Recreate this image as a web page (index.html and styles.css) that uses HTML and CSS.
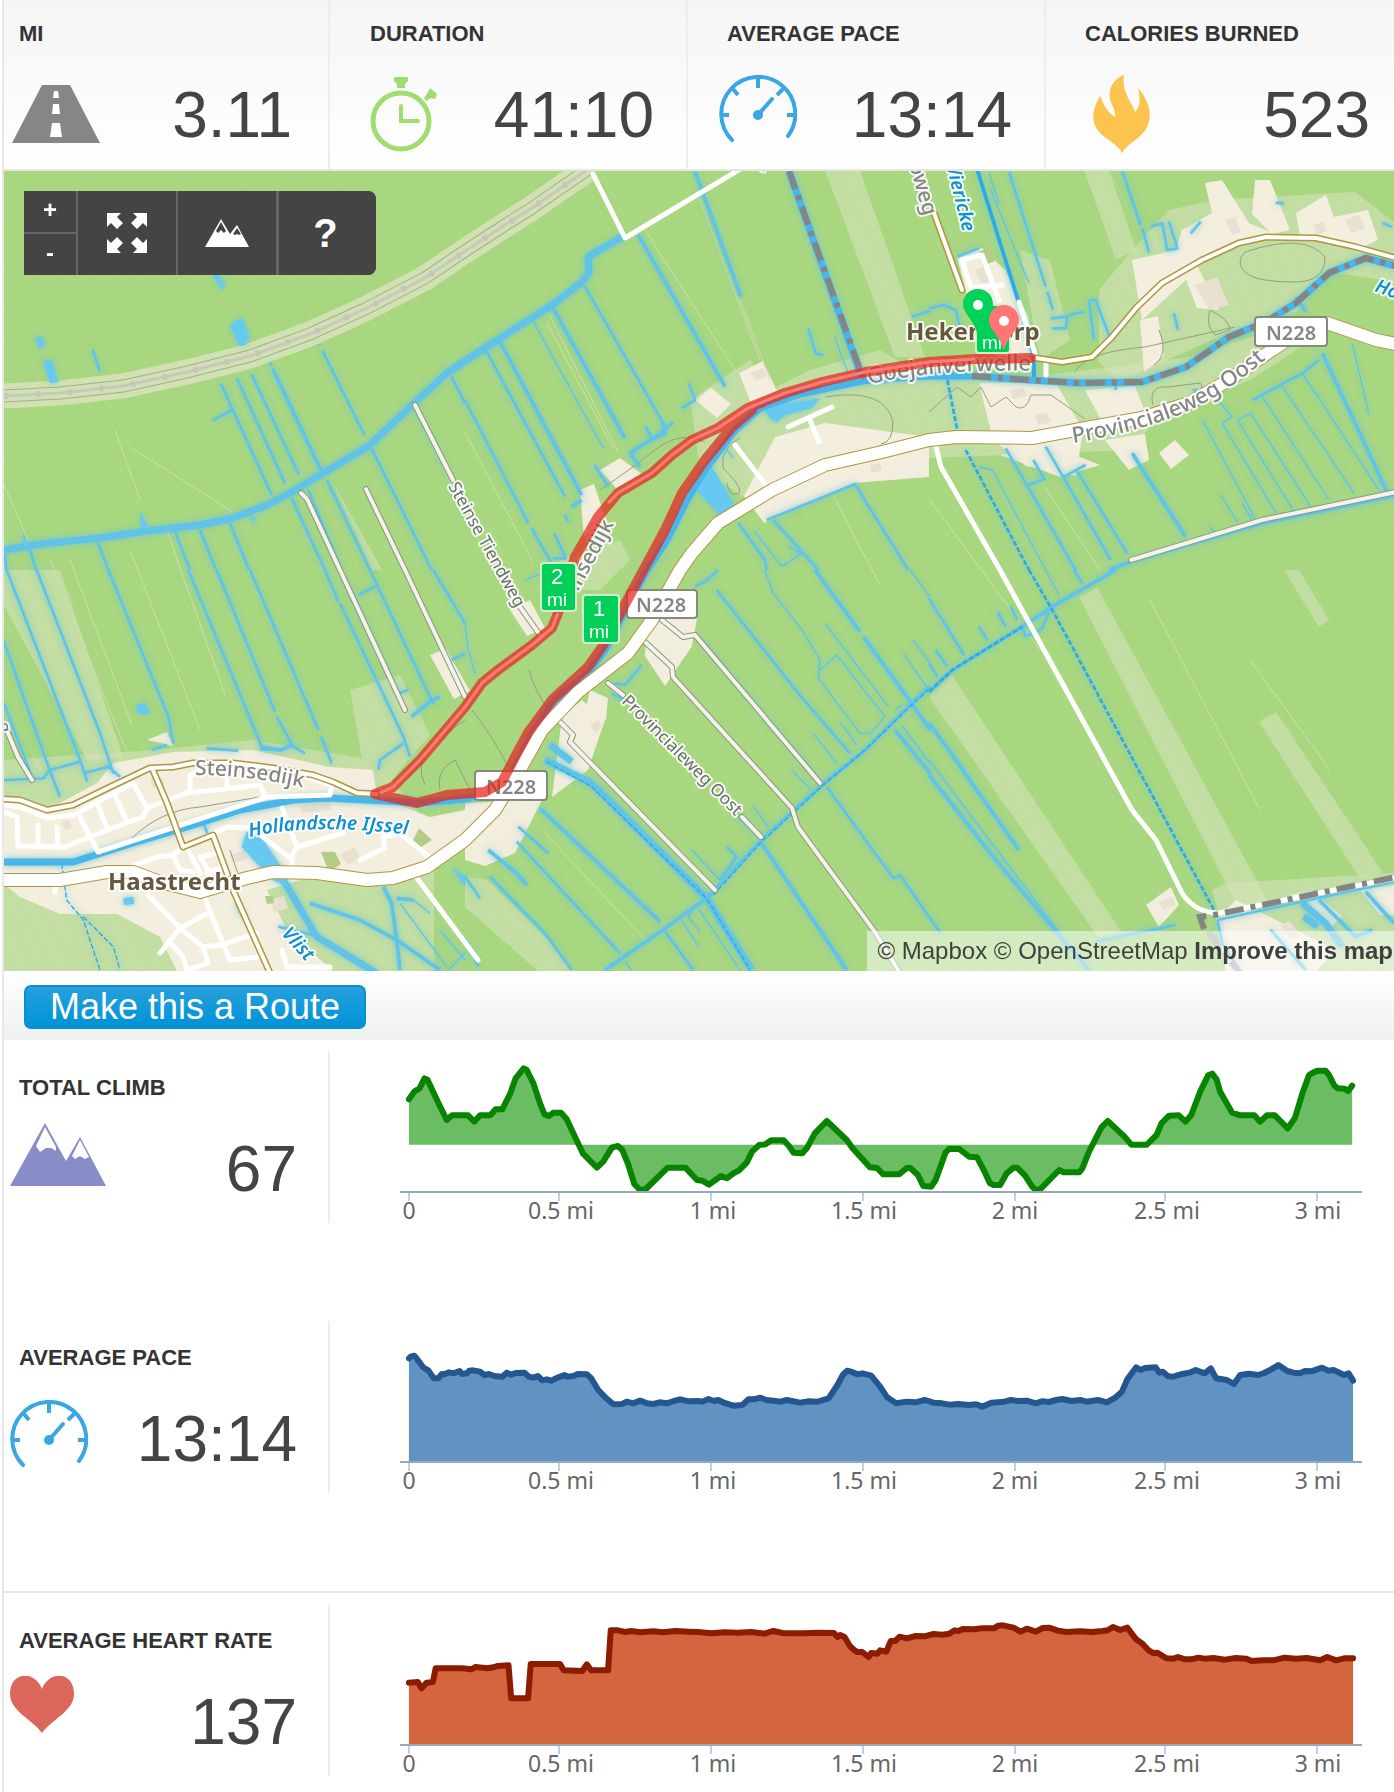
FILE: index.html
```html
<!DOCTYPE html>
<html lang="en">
<head>
<meta charset="utf-8">
<title>Workout</title>
<meta name="viewport" content="width=device-width, initial-scale=1">
<link rel="stylesheet" href="styles.css">
</head>
<body>
<main class="workout">
  <svg class="defs" width="0" height="0" aria-hidden="true">
    <symbol id="gauge" viewBox="0 0 78 68">
      <g fill="none" stroke="#39a7e3" stroke-width="4" stroke-linecap="round">
        <path d="M13 65A37 37 0 1 1 69 61"/>
        <path d="M39 3v10M14 14l5 6M64 14l-6 6M3 40h7M75 40h-7" stroke-linecap="butt"/>
        <path d="M39 40l14-16"/>
      </g>
      <circle cx="39" cy="40" r="5" fill="#39a7e3"/>
    </symbol>
  </svg>

  <section class="stats">
    <div class="stat stat-distance">
      <h2 class="label">MI</h2>
      <div class="reading">
        <svg width="88" height="78" viewBox="0 0 88 78" aria-hidden="true"><path fill="#868686" d="M30 10h28l30 58H0z"/><path fill="#fff" d="M42 16h4l1 7h-6zM41 29h6l1 10h-8zM40 48h8l2 14H38z"/></svg>
        <span class="value">3.11</span>
      </div>
    </div>
    <div class="stat stat-duration">
      <h2 class="label">DURATION</h2>
      <div class="reading">
        <svg width="68" height="78" viewBox="0 0 68 78" aria-hidden="true"><g fill="none" stroke="#a0dd70" stroke-width="5"><circle cx="31" cy="46" r="28"/><path stroke-width="4" stroke-linecap="round" d="M31 31v15h17"/></g><path fill="#a0dd70" d="M26 2h10q3 0 2 4l-3 3v4h-8V9l-3-3q-1-4 2-4zM60 13l7 6-2 5-4-1-5 3-2-3 3-4z"/></svg>
        <span class="value">41:10</span>
      </div>
    </div>
    <div class="stat stat-pace">
      <h2 class="label">AVERAGE PACE</h2>
      <div class="reading">
        <svg width="78" height="78" viewBox="0 0 78 78" aria-hidden="true"><use href="#gauge" width="78" height="68"/></svg>
        <span class="value">13:14</span>
      </div>
    </div>
    <div class="stat stat-calories">
      <h2 class="label">CALORIES BURNED</h2>
      <div class="reading">
        <svg width="58" height="78" viewBox="0 0 58 78" aria-hidden="true"><path fill="#fcc44f" d="M31 0C20 4 15 14 17 24c1 6 6 10 5 18-5-3-10-8-15-21C-3 38-1 50 8 59c8 7 17 11 21 19 4-8 14-12 21-20 11-12 8-31-5-45 2 9 3 18-3 24-3-10-14-20-11-37z"/></svg>
        <span class="value">523</span>
      </div>
    </div>
  </section>

  <section class="map">
    <svg class="map-canvas" viewBox="4 171 1390 800" preserveAspectRatio="xMidYMid slice" role="img" aria-label="Route map">
      <defs>
        <pattern id="plots" width="34" height="180" patternUnits="userSpaceOnUse" patternTransform="rotate(-26)"><path d="M5 0v180M23 30v130" stroke="#aeda8a" fill="none"/></pattern>
        <path id="tSteinsedijk" d="M195 775Q250 775 310 789"/>
        <path id="tIJssel" d="M250 837Q315 822 420 836"/>
        <path id="tGoejan" d="M869 384Q940 368 1044 371"/>
        <path id="tProv" d="M1073 443Q1140 432 1188 411T1300 328"/>
        <path id="rail" d="M4 396L60 393L123 386L187 372L250 356L310 334L367 308L425 278L465 251L505 225L532 208L565 185L590 168"/>
        <path id="n228" d="M0 880L60 880L107 872L133 872L160 882L200 892L247 878L273 872L317 873L367 880L393 878L427 867L465 840L495 810L518 773L542 730L578 692L628 653L652 620L680 570L692 553L718 523L772 490L825 465L882 452L929 440L956 437L1032 438L1086 428L1142 418L1189 403L1229 380L1269 352L1310 325L1327 323L1376 340L1396 344"/>
        <path id="lanes" d="M415 405L453 480M301 493L307 499L340 570L405 710M366 489L405 570L465 697M8 733L18 757L32 780M520 607L540 635M662 620L683 637L695 635L820 783M645 642L672 667L673 677L792 808L798 827L875 932L898 970M608 683L623 695M742 817L761 837M560 722L573 735L570 742L715 890M1131 560L1262 520L1396 492"/>
        <path id="dikes" d="M4 799L20 800L47 810L73 805L110 787L150 768L173 767L193 763L233 763L273 768L313 775L333 782L357 793L377 794M934 213L962 290M1036 358L1062 362L1092 357L1112 337L1136 308L1162 283L1202 260L1239 243L1266 237L1316 238L1356 247L1396 258M152 768L167 803L183 847L213 835L233 890L270 973"/>
      </defs>
      <rect x="4" y="171" width="1390" height="800" fill="#a8d780"/>
      <rect x="4" y="171" width="1390" height="800" fill="url(#plots)"/>

      <!-- pale meadows -->
      <g class="meadow">
        <path d="M4 570h56l63 187-36 3L4 605zM825 170h35l65 187h-30zM1084 170h25l27 80-20 10zM1079 597l18-10 172 316-27 12zM929 697l23-22 170 258-24 4zM1259 722l17-10 107 161-24 4zM1284 570h15l30 50-10 7zM330 477l52 93h-10zM465 876l23 4 57 57 27 34h-34l-73-64z"/>
        <path d="M690 400l60-40 20 30 40-20 70-20 50 30 100-3 160-20 60-20 70-20-3 20-67 43-94 40-26 30-200 8-60 20-110 30-60-40z"/>
        <path d="M1099 290l33-40 37-40 46-10 140-8 39 30v60l-65-10-33 40-67 20-110 50-20-20zM350 690l50-15 30 60-60 70zM560 560l60-20 10 20-30 30-40 0zM4 760l150-10 100-10 120 20 60 70v141H4z"/>
        <path d="M1212 890l14-7 168-10v98h-160zM1020 250l30 10 20 80-30 20z"/>
      </g>
      <!-- built-up land -->
      <g class="town">
        <path d="M4 800l43 10 50-27 16-20 60-11 80-2 77 17 43 3 4 27 53 20 35-7v27l-48 40-117 3-33 10 20 40 46 41H177l-17-34-43-23H60l-40-17-16-13z"/>
        <path d="M465 803l77-3-27 53-30 13-20-6zM562 717l20-17 23 20-17 50-36 27zM648 603l50 10-6 33-27 40-20-30zM590 690l18 8-2 22-20-12zM510 610l20-10 15 28-18 8z"/>
        <path d="M775 437l50-14 104 14v40l-75 6-90 40-20-27zM739 373l24-12 14 30-26 12zM600 470l20-12 22 16-26 14zM580 490l14-6 10 30-20 24zM695 400l16-12 20 16-14 14z"/>
        <path d="M979 383h77l27 47-7 46-50-10-33-26zM1000 455l50-10 50 20-40 12zM1085 390l50-4 10 26-44 8zM1105 440l40-6 4 26-20 10zM1159 453l16-13 14 15-18 14z"/>
        <path d="M1132 260l44-10 6-20 30-17-7-30 17-3 27 43 33 14-33 6-53 20 23 47-22-2-11-28-44 40zM1296 213l30-18 8 22 34-7 10 30-15 7-47-10h-16zM1255 180l15 0 20 50-18 4-20-20z"/>
        <path d="M957 257l25-9 23 22 23 46 8 40h-40l-27-53zM1216 920l20-20 100 50-20 21h-90zM1290 895l22-4 30 25-10 10zM1360 890l34-5v30l-14 0zM1146 905l25-18 8 18-20 22zM430 655l16-6 24 42-16 8zM147 740l20-8 6 14zM1140 320l18-4 6 40-20 16z"/>
      </g>
      <g class="building">
        <path d="M751 373l12-5 4 8-11 5zM1195 285l22-8 12 28-20 5zM1225 220l10-3 6 15-9 3zM1313 225l10-3 4 9-10 4zM1345 220l14-5 6 14-14 4zM975 270l9-3 7 14-9 3zM1159 902l14-5 2 8-12 5zM62 822l6-2 4 8-7 2zM150 780l12-2 3 7-12 3zM230 855l14-4 3 8-14 4zM300 805l30-4 1 9-30 3zM340 855l14-8 6 10-12 8zM270 900l14-4 4 12-14 4zM1280 925l10-4 10 15-9 4zM1010 390l14-2 3 8-14 3zM1035 415l12-3 4 10-13 3zM870 465l10-2 2 7-10 3zM590 725l8-5 5 7-8 6z"/>
      </g>
      <path class="park" d="M321 852l14 0 6 12-12 8zM413 840l6-12 13 12-11 7zM265 896l8 0 1 7-7 1zM979 252l11-5 5 14-12 5zM690 690l10 4-4 14-10-6z"/>

      <!-- railway -->
      <use href="#rail" class="rail-bed"/><use href="#rail" class="rail-edge"/><use href="#rail" class="rail-gap"/><use href="#rail" class="rail-line"/>
      <use href="#rail" class="rail-ties"/>

      <!-- field paths and contour lines -->
      <path class="track" d="M130 447l103 65M115 430l25 70M4 485l25 57M50 560l80 200M70 560l62 165M130 550l70 180M165 525l60 170M548 312l70 140M547 323l66 125M645 230l90 140M700 200l60 160M740 300l30 80M465 432l68 130M545 833l100 107M830 490l50 95M930 500l110 150M1040 480l60 90M1150 600l110 210M1250 660l80 110"/>
      <path class="contour" d="M1245 252q60-20 80 5 0 25-30 25-40 0-50-10-10-10 0-20zM825 397q60-10 68 25 0 20-12 22M740 438q-20 10-17 30 20 20 16 25-10 5-12-10M600 490q30-20 55-40t50-8M929 412l28-25 14 10 10-10 10 20 15-10 10 10q10 5 15-12l20 0 34 24M1075 372q10-20 70-25l90-20M1210 310q20 10 20 20l-15 5q-10-10-5-25zM1153 405q-5-20 15-18l32-4q10 10-30 22M425 785q-10-20 5-40l35-25M440 790q-5-20 15-30l15 30M529 670q5 20 20 40M472 710q20 25 38 60M1159 330q10 25-5 35M130 840q30-30 70-33l60-10M240 880l-10-30"/>

      <!-- waterways -->
      <g class="water">
        <path class="w8" d="M4 550L40 544L100 538L147 531L200 525L233 518L267 505L290 493L320 475L347 459L370 445L410 407L447 373L465 361L502 337L552 305L582 282L589 273L588 257L625 235"/>
        <g transform="translate(0 170) scale(.333333)">
          <path class="t9" d="M662 640L815 975M697 720L637 752M711 625L855 940M755 613L897 915M810 578l4 10M957 523l2 4M967 542L1093 795M1112 830L1295 1200M1355 620L1395 700M980 930L1110 1200M925 960L1025 1200M875 985L975 1200M690 1060L747 1200M600 1080L648 1200M525 1085L570 1200M295 1120L325 1200M90 1140L108 1200M12 1140L20 1200M278 540L300 605M1245 715L1355 930"/>
          <path class="t12" d="M818 596L962 900"/>
          <path class="fill" d="M690 465L725 443L748 500L735 525L718 527ZM638 315l28 45 10-10-18-35zM105 503l22-3 8 28-15 8zM130 570l25 3 20 63-25 3zM420 1020l25 55h-20zM750 1045l15-5-3 22zM65 1080l20 45h-12z"/>
        </g>
        <g transform="translate(465 170) scale(.333333)">
          <path class="t12" d="M690 5L828 380M520 195L780 650M265 415L480 805M105 515L350 975M592 755L600 790L555 810L495 850L525 890M320 1010L350 990"/>
          <path class="t9" d="M360 350L592 755M65 545L300 980M0 690L190 1060M200 1075L260 1180M540 768l20 35M1030 475L1052 550L1075 555M672 640L690 690L650 715M388 885L430 950M300 1035l10 20M268 1090l32 70M1340 440l55-18M905 1050L1170 942L1205 1000L1330 1200M925 1050L1060 1200M820 1060L900 1170L905 1200M560 808L625 757M265 1165h40"/>
          <path class="t5" d="M205 455L415 835M1108 500L1150 610M870 1085L950 1190L1010 1150L970 1130M770 820l35 45"/>
          <path class="fill" d="M695 960L740 890L820 1025L770 1040ZM895 715L1065 685L1040 715L960 735L935 757L915 745z"/>
        </g>
        <g transform="translate(929 170) scale(.333333)">
          <path class="t12 deep" d="M145 0L270 400L315 560V630"/>
          <path class="t5" d="M180 10L210 100M185 60L300 340M150 890L190 900L350 1200M820 750L980 1050M880 760L1045 1035M925 750L1095 1025M965 730L1145 1010M1000 680L1200 990M1060 650L1275 970M1120 610L1350 960M1270 520L1320 735M875 975l50 80M940 1000l35 60M840 1070l20 20M925 750l40-20M880 760l30-20-70-80M1150 660l20 20"/>
          <path class="t9" d="M85 260L150 235M240 5L350 350M355 365L372 420M580 5L635 165M640 175L660 248M665 170L700 160L715 240L745 235L720 155M815 155L785 190M365 445L415 440L410 475L370 475M480 390L500 390L545 510M480 390L495 510M420 435L465 425M0 415L45 405L80 420L95 480M735 430l12 50M230 835L440 1200M313 870L345 925M350 830L405 925L545 1170M405 920L470 885M445 905L595 1150M970 690L1120 610L1170 570M1040 98l25 3M1360 160l30 10M790 660h15M560 640v20M300 945l50-20"/>
          <path class="t12" d="M610 850L635 890L770 1100M1180 550L1330 870L1375 970M540 1200L605 1175L1000 1060L1395 978M1100 380l30 45"/>
          <path class="t9 deep dash" d="M55 630L85 780M110 840L300 1200"/>
        </g>
        <g transform="translate(0 570) scale(.333333)">
          <path class="t9" d="M20 0L240 570L262 635M110 0L300 490L340 610M10 210L145 590L180 680M12 400L95 620M325 0L505 440L520 520M565 0L785 530L850 540M650 0L825 425M830 440L880 530L915 550M750 0L955 480M963 500L995 580M975 0L1015 95M1020 100L1210 500L1230 560M1030 20L1195 370L1225 360M1110 0L1280 360L1300 400M1075 75L1125 50M1300 0L1395 160M12 630L130 625L150 600L240 575M250 610L325 590L360 620M455 540L500 525M620 535L715 542M1135 600L1140 570L1210 520M1355 270L1395 250M610 755L625 800M835 1070L940 1095"/>
          <path class="t12" d="M1235 440L1290 395L1320 380M930 1000L1080 1050L1190 1110L1320 1200M1150 950L1175 1000L1190 1110L1200 1200M1190 985L1240 990M710 1000l25 45M780 535l60 5 40-15"/>
          <path class="t5" d="M1200 1000L1340 1190M1240 990l50 40M1320 1080l75 90M1395 1150l-50 50"/>
          <path class="river" d="M850 930L950 1100L1130 1210"/>
          <path class="fill" d="M725 830L740 785L790 810L850 900L860 950L820 930L770 880zM410 405l25-5 15 30-35 3zM370 985l30-5 2 22-30 3zM1355 890l40 30v30z"/>
          <path class="t5 deep dash" d="M185 880L200 990L250 1050L300 1200M250 1040L340 1130L360 1200"/>
        </g>
        <g transform="translate(465 570) scale(.333333)">
          <path class="t5" d="M900 0L925 70L1015 185L1065 270L1060 325L1185 490L1215 490L1260 440L1115 255L1065 300M1080 160L1270 410M1315 250L1385 350M1335 0L1395 80M1310 465L1395 580M700 1015L825 1200M680 840L765 930M865 710L910 770M1125 455l50 70M1045 490l70 90M1290 420l20-15M680 1020l-10 20 35 45M650 1050l50 80M980 600l60 60M1345 210l50 70M480 1175l20 25M0 160l10 80 20 70M180 30l50-20"/>
          <path class="t9" d="M755 60L1000 370L1155 550M1085 650L1285 925L1305 915L1395 1045M160 770L250 850M155 815L465 1150M75 920L240 1090L320 1200M0 920L45 985M600 1085L685 1200M785 830L815 860L765 930M450 340L480 345L530 285M820 740L885 805M725 30L760 0M690 50L730 30M700 200L1065 635M440 370L475 390M0 1110L40 1190"/>
          <path class="t12" d="M1050 0L1185 185M1195 200L1340 400L1395 480M890 820L1145 1200M225 715L585 1055M70 840L160 915L185 945M1290 480L1395 610M420 1200L600 1075L725 985L890 810L1070 645L1200 540L1340 400L1395 350"/>
          <path class="river" d="M240 570L380 640L600 860L725 985L860 1200M255 525L320 575"/>
          <path class="t5 deep dash" d="M245 575L380 650L600 865L725 985L855 1200M745 975L890 815L1070 650L1200 540L1340 405L1395 355"/>
        </g>
        <g transform="translate(929 570) scale(.333333)">
          <path class="t9" d="M0 85L105 255M20 240L55 290M150 170L175 210M205 125L230 170M245 110l20 40M435 0L460 40M280 170l10 30 50-25 20-50M0 280l25 40M865 1050L1395 935M865 1050L880 1120L930 1200M500 1115L740 1065M1025 1080L1130 1200M0 1040L35 1090"/>
          <path class="t12" d="M0 365L70 300L280 170L370 110L560 0M0 460L60 540L150 670L270 840M0 615L200 870L480 1200M1170 990L1280 1100L1330 1080M1310 965L1395 1060"/>
          <path class="t5" d="M350 0L390 75M0 570L400 1100"/>
          <path class="river" d="M1120 1000L1190 1060L1240 1130M1125 1040l40 30"/>
          <path class="t9 deep dash" d="M300 0L370 120L855 1020M0 365L70 300L280 170"/>
        </g>
        <path class="main-river" d="M4 862L73 862L133 843L187 827L240 810L293 800L327 798L367 800L420 803L465 799L485 794L512 773L532 733L555 700L588 673L605 650L622 617L647 570L667 540L687 500L705 470L735 430L760 408L800 394L862 381L895 378L929 376L972 376L1029 380L1079 383L1142 382L1186 367L1229 337L1266 322L1296 303L1329 273L1366 258L1396 266"/>
        <path class="main-river" d="M789 171L862 378"/>
      </g>

      <!-- lanes -->
      <use href="#lanes" class="lanes-case"/><use href="#lanes" class="lanes"/>
      <g class="streets">
        <path d="M4 805L20 807L47 818L73 815L133 783L147 808L143 817L107 830L65 847L18 846L17 817L4 812M80 817L98 852L267 797L330 795L332 785L307 777M147 808L187 793L260 785L265 797M97 803L108 830M115 795L127 822M38 825V845M57 827L58 845M190 792V775L200 772M227 787V778M135 865L157 857L173 855L183 847L227 827L250 828M173 855L180 870L193 872M282 808L297 847L290 858L263 837M297 847L343 833M292 865V858M360 860L385 848L383 837L400 833L430 858M148 895L180 928L160 953M170 942L183 957L187 970M180 928L210 912L205 898M210 912L230 960M180 928L203 947L222 945L257 933M203 947L208 963L187 970M230 960L257 957M282 950L287 967L330 967M200 857L210 873M217 853L200 857M207 872L222 868M188 850L200 873M55 885V892M417 878L478 960"/>
        <path d="M593 174L625 238L742 168M735 445L768 488M788 427L832 407M810 420L819 442M936 447L941 467L1000 570L1132 810L1156 840L1182 893Q1195 913 1219 913L1396 878M962 260L982 255L999 300M962 260L971 288L1002 285M1019 302L1036 357M1046 360V375"/>
      </g>
      <use href="#dikes" class="dike-case"/><use href="#dikes" class="dike"/>
      <use href="#n228" class="n228-case"/><use href="#n228" class="n228"/>

      <path class="border" d="M789 171L862 375L869 381M972 376L1029 380L1079 383L1142 382L1186 367L1229 337L1266 322L1296 303L1329 273L1366 258L1396 266M1204 929L1200 917L1219 914L1396 877"/>
      <path class="border faded" d="M1208 932L1240 973"/>

      <!-- place and street names -->
      <g class="names">
        <text class="place" x="108" y="890">Haastrecht</text>
        <text class="place" x="906" y="340">Hekendorp</text>
        <text class="road"><textPath href="#tSteinsedijk">Steinsedijk</textPath></text>
        <text class="road road-wide"><textPath href="#tGoejan">Goejanverwelle</textPath></text>
        <text class="road road-wide"><textPath href="#tProv">Provincialeweg Oost</textPath></text>
        <text class="stream"><textPath href="#tIJssel">Hollandsche IJssel</textPath></text>
        <text class="stream" transform="translate(281 934) rotate(48)">Vlist</text>
        <text class="stream" transform="translate(945 160) rotate(76)">Wiericke</text>
        <text class="stream" transform="translate(757 168) rotate(30)">e</text>
        <text class="stream" transform="translate(1374 291) rotate(20)">Ho</text>
        <text class="road" transform="translate(909 164) rotate(74)">oweg</text>
        <text class="road" transform="translate(578 592) rotate(-62)">insedijk</text>
        <text class="lane" transform="translate(448 486) rotate(61)">Steinse Tiendweg</text>
        <text class="lane" transform="translate(621 702) rotate(45)">Provincialeweg Oost</text>
        <text class="lane" transform="translate(-2 723) rotate(80)">g</text>
      </g>
      <g class="shields">
        <rect x="1255" y="317" width="72" height="29" rx="3"/><text x="1291" y="340">N228</text>
        <rect x="627" y="590" width="70" height="28" rx="3"/><text x="661" y="612">N228</text>
        <rect x="475" y="771" width="72" height="29" rx="3"/><text x="511" y="794">N228</text>
      </g>

      <!-- recorded run -->
      <path class="run" d="M1031 358L975 359L929 362L865 372L822 382L785 393L748 408L718 428L692 440L672 455L652 473L618 493L598 517L575 557L558 613L552 628L532 645L498 670L482 683L465 707L420 760L393 787L375 794L417 803L447 795L485 792L502 782L515 757L528 733L552 700L588 667L602 647L622 610L645 567L665 530L682 493L705 460L732 427L752 410"/>
      <path class="run-core" d="M975 359L929 362L865 372L822 382L785 393L748 408L718 428L692 440L672 455L652 473L618 493L608 503M558 613L552 628L532 645L498 670L482 683L465 707L420 760L393 787L380 793"/>

      <g class="mile">
        <rect x="976" y="305" width="34" height="48" rx="3"/><text class="unit" x="992" y="349">mi</text>
        <rect x="541" y="563" width="35" height="48" rx="3"/><text x="557" y="584">2</text><text class="unit" x="557" y="606">mi</text>
        <rect x="583" y="595" width="36" height="48" rx="3"/><text x="599" y="616">1</text><text class="unit" x="599" y="638">mi</text>
      </g>
      <path fill="#00d35a" d="M978 289c9 0 15 7 15 15 0 10-9 15-15 32-4-17-15-22-15-32 0-8 6-15 15-15z"/><circle cx="978" cy="305" r="5" fill="#fff"/>
      <path fill="#ff7672" d="M1004 305c9 0 15 7 15 15 0 10-10 14-15 30-5-16-15-20-15-30 0-8 6-15 15-15z"/><circle cx="1004" cy="321" r="5" fill="#fff"/>
    </svg>

    <div class="controls">
      <div class="zoom">
        <button type="button" aria-label="Zoom in">+</button>
        <button type="button" aria-label="Zoom out">-</button>
      </div>
      <button type="button" class="tool" aria-label="Full screen">
        <svg width="40" height="40" viewBox="0 0 40 40" aria-hidden="true"><path id="arrow" fill="#fff" d="M0 0h14l-4 4 6 6-6 6-6-6-4 4z"/><use href="#arrow" transform="matrix(-1 0 0 1 40 0)"/><use href="#arrow" transform="matrix(1 0 0 -1 0 40)"/><use href="#arrow" transform="matrix(-1 0 0 -1 40 40)"/></svg>
      </button>
      <button type="button" class="tool" aria-label="Terrain">
        <svg width="44" height="30" viewBox="0 0 44 30" aria-hidden="true"><path fill="#fff" d="M0 29L16 1l9 15 7-9 12 22z"/><path fill="#444" d="M16 4l5 9-2 2-3-3-3 3-2-2zM32 10l4 6-2 1-2-1-2 1-2-1z"/></svg>
      </button>
      <button type="button" class="tool help" aria-label="Help">?</button>
    </div>
    <p class="credit"><a href="#">© Mapbox</a> <a href="#">© OpenStreetMap</a> <a href="#" class="improve">Improve this map</a></p>
  </section>

  <div class="actions"><button type="button" class="make-route">Make this a Route</button></div>

  <section class="row">
    <div class="summary">
      <h2 class="label">TOTAL CLIMB</h2>
      <div class="reading">
        <svg width="96" height="78" viewBox="0 0 96 78" aria-hidden="true"><path fill="#898dc7" d="M0 63L35 0l21 38 14-24 26 49z"/><path fill="#fff" d="M35 4l11 20 0 4-5-3-5 0-6 4-4-6zM70 17l9 17-4 2-5-3-5 3-3-3z"/></svg>
        <span class="value">67</span>
      </div>
    </div>
    <div class="chart">
      <svg viewBox="400 11 962 172" role="img" aria-label="Elevation over distance">
        <g transform="scale(.4445 .3333)">
          <path fill="#6abd62" d="M920 314V178L932 155L944 145L955 115L962 120L985 185L1005 240L1017 226H1053L1067 245L1080 226H1103L1115 208H1130L1148 160L1160 115L1178 85L1185 90L1200 130L1215 190L1225 223L1235 228L1245 218H1262L1275 238L1295 295L1312 342L1343 383L1357 365L1377 322L1390 318L1400 330L1413 372L1427 432L1440 450L1453 447L1502 383H1542L1568 420L1580 422L1595 434L1622 408L1635 415L1650 400L1662 392L1680 368L1692 335L1708 315L1722 313L1735 301H1763L1775 318L1785 338L1805 340L1815 325L1833 280L1860 243L1905 300L1918 325L1957 382L1973 384L1987 403H2023L2040 384H2048L2065 405L2077 438L2095 440L2105 420L2127 338L2135 327H2158L2180 350L2198 352L2215 395L2227 430L2235 435H2250L2265 400L2280 383H2288L2305 405L2322 440L2330 450L2340 448L2383 390L2393 397H2428L2435 385L2450 335L2478 262L2492 243L2530 290L2545 314H2580L2602 285L2613 250L2630 227L2652 226L2667 245L2680 225L2700 155L2718 106L2727 101L2737 118L2745 155L2772 218L2790 226H2822L2835 245L2850 226H2868L2897 265L2913 235L2930 160L2945 105L2955 97L2965 92H2982L2990 105L3002 137L3010 145L3025 146L3033 153L3042 137V314Z"/>
          <path class="series climb" d="M920 178L932 155L944 145L955 115L962 120L985 185L1005 240L1017 226H1053L1067 245L1080 226H1103L1115 208H1130L1148 160L1160 115L1178 85L1185 90L1200 130L1215 190L1225 223L1235 228L1245 218H1262L1275 238L1295 295L1312 342L1343 383L1357 365L1377 322L1390 318L1400 330L1413 372L1427 432L1440 450L1453 447L1502 383H1542L1568 420L1580 422L1595 434L1622 408L1635 415L1650 400L1662 392L1680 368L1692 335L1708 315L1722 313L1735 301H1763L1775 318L1785 338L1805 340L1815 325L1833 280L1860 243L1905 300L1918 325L1957 382L1973 384L1987 403H2023L2040 384H2048L2065 405L2077 438L2095 440L2105 420L2127 338L2135 327H2158L2180 350L2198 352L2215 395L2227 430L2235 435H2250L2265 400L2280 383H2288L2305 405L2322 440L2330 450L2340 448L2383 390L2393 397H2428L2435 385L2450 335L2478 262L2492 243L2530 290L2545 314H2580L2602 285L2613 250L2630 227L2652 226L2667 245L2680 225L2700 155L2718 106L2727 101L2737 118L2745 155L2772 218L2790 226H2822L2835 245L2850 226H2868L2897 265L2913 235L2930 160L2945 105L2955 97L2965 92H2982L2990 105L3002 137L3010 145L3025 146L3033 153L3042 137"/>
        </g>
        <path class="ticks" d="M409 153v8M559 153v8M711 153v8M863 153v8M1015 153v8M1165 153v8M1317 153v8"/><path class="axis" d="M400 152h962"/>
        <g class="scale"><text x="409" y="179">0</text><text x="561" y="179">0.5 mi</text><text x="713" y="179">1 mi</text><text x="864" y="179">1.5 mi</text><text x="1015" y="179">2 mi</text><text x="1167" y="179">2.5 mi</text><text x="1318" y="179">3 mi</text></g>
      </svg>
    </div>
  </section>

  <section class="row">
    <div class="summary">
      <h2 class="label">AVERAGE PACE</h2>
      <div class="reading">
        <svg width="78" height="78" viewBox="0 0 78 78" aria-hidden="true"><use href="#gauge" y="7" width="78" height="68"/></svg>
        <span class="value">13:14</span>
      </div>
    </div>
    <div class="chart">
      <svg viewBox="400 11 962 172" role="img" aria-label="Pace over distance">
        <g transform="scale(.889 .3333)">
          <path fill="#6093c2" d="M460 454V145L466 137L470 150L476 172L482 182L488 205L493 205L500 193L510 188L517 183L525 190L532 181L540 185L545 195L565 200L570 188L590 188L600 203L610 210L620 212L635 195L645 198L660 193L665 205L673 240L682 265L690 283L700 282L712 280L720 272L735 282L750 280L765 268L785 273L797 267L808 270L825 287L835 285L842 268L855 263L870 272L900 278L920 275L932 265L942 225L948 195L953 182L965 193L980 197L990 230L998 262L1008 280L1040 270L1060 280L1105 290L1115 278L1145 273L1165 280L1195 267L1235 270L1245 277L1255 262L1262 245L1268 208L1278 172L1300 172L1308 190L1320 200L1345 180L1355 190L1362 175L1368 205L1380 210L1388 222L1395 195L1415 195L1430 178L1438 165L1448 183L1462 190L1487 173L1500 180L1512 195L1522 212V454Z"/>
          <path class="series pace" d="M460 145L462 140L466 137L470 150L476 172L482 182L488 205L493 205L497 192L500 193L505 187L510 190L517 183L520 192L525 190L528 182L532 181L540 185L545 195L550 192L556 198L565 200L570 188L575 194L580 189L590 188L595 200L600 203L605 198L610 211L615 208L620 212L628 202L635 195L638 200L645 198L650 192L660 193L665 205L673 240L682 265L690 283L700 282L705 275L712 280L720 272L728 280L735 282L742 277L750 280L758 273L765 268L775 274L785 273L790 275L797 267L803 273L808 270L815 279L825 287L835 285L842 268L848 268L855 263L862 270L870 272L878 275L885 270L900 278L910 274L920 275L932 265L942 225L948 195L953 182L957 185L965 193L970 190L980 197L990 230L998 262L1008 280L1020 275L1030 277L1040 270L1050 278L1060 280L1068 284L1078 282L1090 285L1098 283L1105 290L1115 278L1130 275L1137 270L1145 273L1155 272L1165 280L1172 274L1180 276L1188 270L1195 267L1205 273L1215 270L1222 275L1235 270L1245 277L1255 262L1262 245L1268 208L1278 172L1283 180L1288 174L1300 172L1304 188L1308 185L1314 199L1320 200L1330 192L1338 188L1345 180L1355 190L1362 175L1368 205L1380 210L1388 222L1395 195L1405 191L1415 195L1422 189L1430 178L1438 165L1448 183L1455 188L1462 190L1468 183L1475 184L1487 173L1494 182L1500 180L1512 195L1517 190L1522 212"/>
        </g>
        <path class="ticks" d="M409 153v8M559 153v8M711 153v8M863 153v8M1015 153v8M1165 153v8M1317 153v8"/><path class="axis" d="M400 152h962"/>
        <g class="scale"><text x="409" y="179">0</text><text x="561" y="179">0.5 mi</text><text x="713" y="179">1 mi</text><text x="864" y="179">1.5 mi</text><text x="1015" y="179">2 mi</text><text x="1167" y="179">2.5 mi</text><text x="1318" y="179">3 mi</text></g>
      </svg>
    </div>
  </section>

  <section class="row row-heart">
    <div class="summary">
      <h2 class="label">AVERAGE HEART RATE</h2>
      <div class="reading">
        <svg width="64" height="78" viewBox="0 0 64 78" aria-hidden="true"><path fill="#dc665c" d="M32 57C22 43 0 35 0 18 0-5 25-6 32 13 39-6 64-5 64 18 64 35 42 43 32 57z"/></svg>
        <span class="value">137</span>
      </div>
    </div>
    <div class="chart">
      <svg viewBox="400 11 962 172" role="img" aria-label="Heart rate over distance">
        <g transform="translate(0 -12) scale(.889 .3333)">
          <path fill="#d4653f" d="M460 490V305L470 303L474 322L480 305L487 303L490 262L530 265L535 258L572 253L575 352H594L597 249H630L634 268L655 270L660 250L665 268H684L687 148L710 150L800 153L860 158L870 150L890 157L938 156L950 168L960 205L970 213L977 228L987 213L997 212L1002 180L1015 168L1068 158L1078 145L1118 142L1128 133L1140 140L1148 152L1155 143L1165 152L1180 140L1200 153L1240 150L1252 138L1268 140L1278 175L1292 208L1302 215L1312 232L1402 233L1408 240L1432 238L1445 230L1485 238L1493 228L1503 238L1522 232V490Z"/>
          <path class="series heart" d="M460 305L470 303L474 322L480 305L487 303L490 262H520L530 265L535 258L548 262L555 259L560 255L572 253L575 352H594L597 249H630L634 268L655 270L660 250L665 268H684L687 148L695 148L703 153L710 150L720 154L735 151L745 154L760 150L775 152L785 153L800 157L815 154L830 155L845 153L860 158L870 150L880 156L890 157L905 157L920 155L938 156L942 168L945 162L950 168L956 195L960 205L964 213L970 213L977 228L980 216L987 218L990 208L997 212L1002 180L1007 180L1012 167L1020 172L1030 165L1040 166L1050 159L1060 161L1068 158L1074 148L1078 150L1083 144L1095 145L1105 142L1118 142L1123 134L1128 133L1140 140L1148 152L1155 143L1165 152L1173 141L1180 140L1190 149L1200 153L1215 151L1228 153L1240 150L1246 148L1252 138L1260 147L1268 140L1278 175L1285 188L1292 208L1297 216L1302 215L1312 232L1320 233L1325 228L1333 235L1340 235L1348 230L1355 233L1365 231L1378 236L1390 231L1402 233L1408 240L1420 238L1432 238L1445 230L1458 233L1470 231L1485 238L1493 228L1503 238L1512 232L1522 232"/>
        </g>
        <path class="ticks" d="M409 153v8M559 153v8M711 153v8M863 153v8M1015 153v8M1165 153v8M1317 153v8"/><path class="axis" d="M400 152h962"/>
        <g class="scale"><text x="409" y="179">0</text><text x="561" y="179">0.5 mi</text><text x="713" y="179">1 mi</text><text x="864" y="179">1.5 mi</text><text x="1015" y="179">2 mi</text><text x="1167" y="179">2.5 mi</text><text x="1318" y="179">3 mi</text></g>
      </svg>
    </div>
  </section>
</main>
</body>
</html>
```
FILE: styles.css
```css
* { box-sizing: border-box; }
body {
  margin: 0;
  background: #fff;
  color: #444;
  font-family: "Liberation Sans", Arial, sans-serif;
}
h2, p { margin: 0; }
button { font-family: inherit; border: 0; padding: 0; margin: 0; cursor: pointer; }
svg { display: block; flex: none; }
.defs { position: absolute; }

.workout { margin-left: 2px; border-left: 2px solid #e8e8e8; overflow: hidden; }

.label { font-size: 22px; line-height: 26px; font-weight: bold; color: #333; padding-left: 15px; white-space: nowrap; }
.value { font-size: 64px; line-height: 72px; }
.reading { display: flex; justify-content: space-between; align-items: flex-start; }

.stats {
  display: grid;
  grid-template-columns: 324fr 358fr 358fr 350fr;
  height: 171px;
  background: linear-gradient(#f5f5f5, #fff);
  border-bottom: 2px solid #e6e6e6;
}
.stat { padding: 21px 32px 0 8px; border-left: 2px solid #eee; }
.stat-distance { border-left: 0; padding-right: 36px; }
.stat .label { margin-bottom: 28px; padding-left: 7px; }
.stat-duration { padding-left: 40px; }
.stat-pace { padding-left: 31px; }
.stat-calories { padding-left: 47px; padding-right: 24px; }
.stat-duration .label { padding-left: 0; }
.stat-pace .label { padding-left: 8px; }
.stat-calories .label { padding-left: 0; margin-left: -8px; }
.stat .value { padding-top: 4px; }

.map { position: relative; }
.map-canvas { width: 100%; height: auto; }
.meadow { fill: #d8e3bd; fill-opacity: .55; }
.town { fill: #f6eee2; fill-opacity: .95; }
.building { fill: #e8e0d0; }
.park { fill: #b5cc88; }
.map-canvas use, .track, .contour, .border, .run, .run-core { fill: none; }
.rail-bed { stroke: #d1e1b2; stroke-width: 25px; }
.rail-edge { stroke: #a3ae90; stroke-width: 13px; }
.rail-gap { stroke: #d1e1b2; stroke-width: 11px; }
.rail-line { stroke: #c8c8bd; stroke-width: 3px; }
.rail-ties { stroke: #c8c4bd; stroke-width: 6px; stroke-dasharray: 4 28; }
.track { stroke: #cfdfad; stroke-width: 1px; }
.contour { stroke: #93a083; stroke-width: 1px; }
.water { fill: none; stroke: #60c3e7; stroke-linejoin: round; filter: drop-shadow(0 0 3px #6cc6d4); }
.water .fill { fill: #66c9f2; stroke: none; }
.w8 { stroke-width: 7px; }
.t5 { stroke-width: 4px; }
.t9 { stroke-width: 8px; }
.t12 { stroke-width: 11px; }
.river { stroke-width: 20px; }
.water .deep { stroke: #2ea9e6; }
.dash { stroke-dasharray: 16 6; }
.main-river { stroke: #49b5e9; stroke-width: 7px; }
.lanes-case, .lanes, .streets, .dike-case, .dike { fill: none; stroke-linecap: round; stroke-linejoin: round; }
.lanes-case { stroke: #8b967a; stroke-width: 6px; }
.lanes { stroke: #f3f2eb; stroke-width: 4px; }
.streets { stroke: #fff; stroke-width: 5px; }
.dike-case { stroke: #b0953f; stroke-width: 7px; }
.dike { stroke: #fffefa; stroke-width: 4px; }
.n228-case { stroke: #b0953f; stroke-width: 14px; stroke-linejoin: round; }
.n228 { stroke: #fff; stroke-width: 12px; stroke-linejoin: round; }
.border { stroke: #858585; stroke-width: 6px; stroke-dasharray: 19 7 5 7; }
.faded { stroke: #aaa; }
.names { font-family: "Noto Sans", sans-serif; paint-order: stroke; stroke: #fff; stroke-width: 4px; stroke-opacity: .85; stroke-linejoin: round; }
.place { font-size: 24px; font-weight: 700; fill: #66583f; }
.road { font-size: 21px; fill: #858585; font-weight: 500; }
.road-wide { font-size: 22px; }
.lane { font-size: 17px; fill: #6c6c6c; }
.stream { font-size: 19px; font-weight: 600; font-style: italic; fill: #0b90d4; }
.shields rect { fill: #fff; stroke: #858a7c; stroke-width: 2px; }
.shields text { font-family: "Noto Sans", sans-serif; font-size: 20px; font-weight: 600; text-anchor: middle; fill: #858585; }
.run { stroke: #e4251c; stroke-opacity: .72; stroke-width: 10px; stroke-linejoin: round; stroke-linecap: round; }
.run-core { stroke: #ff7a78; stroke-width: 3px; stroke-linejoin: round; }
.mile rect { fill: #00d058; stroke: #d3eed0; stroke-width: 2px; }
.mile text { font-size: 22px; text-anchor: middle; fill: #fff; }
.mile .unit { font-size: 19px; }

.controls {
  position: absolute;
  top: 20px;
  left: 20px;
  display: flex;
  gap: 2px;
  height: 84px;
  background: #666;
  border-radius: 0 8px 8px 0;
  overflow: hidden;
}
.zoom { display: grid; grid-template-rows: 1fr 1fr; gap: 2px; width: 52px; }
.controls button { background: #444; color: #fff; font-size: 24px; font-weight: bold; line-height: 24px; padding-bottom: 3px; }
.controls .tool { display: grid; place-items: center; width: 98px; padding: 0; }
.controls .help { font-size: 40px; width: 97px; margin-left: 1px; padding-right: 4px; }
.credit {
  position: absolute;
  right: 0;
  bottom: 0;
  padding: 0 1px 0 10px;
  font-size: 24px;
  line-height: 40px;
  color: #404040;
  background: rgba(255, 255, 255, .5);
  white-space: nowrap;
}
.credit a { color: inherit; text-decoration: none; }
.improve { font-weight: bold; }

.actions { padding: 14px 20px 10px; background: linear-gradient(#fff, #eff0f0); border-bottom: 1px solid #f3f3f3; }
.make-route {
  display: block;
  height: 44px;
  padding: 0 24px;
  font-size: 36px;
  line-height: 40px;
  color: #fff;
  background: linear-gradient(#26a0dc, #0093d8);
  border: 2px solid #0690d3;
  border-radius: 7px;
}

.row { display: grid; grid-template-columns: 324px 1fr; padding: 11px 0 87px; }
.summary { padding: 24px 31px 0 0; }
.summary .label { margin-bottom: 22px; }
.summary .reading { padding-left: 6px; }
.summary .value { padding-top: 10px; }
.chart { padding: 0 32px 0 70px; border-left: 2px solid #eee; }
.chart svg { width: 100%; height: auto; }
.row-heart { margin-top: 11px; border-top: 2px solid #e8e8e8; padding-bottom: 17px; }
.series { fill: none; vector-effect: non-scaling-stroke; stroke-linejoin: round; stroke-linecap: round; }
.climb { stroke: #088500; stroke-width: 6px; }
.pace { stroke: #24568f; stroke-width: 6px; }
.heart { stroke: #8c1c00; stroke-width: 6px; }
.ticks { stroke: #c0d0e0; stroke-width: 2px; }
.axis { stroke: #94a9c0; stroke-width: 2px; }
.scale { font-family: "Noto Sans", sans-serif; font-size: 23px; text-anchor: middle; fill: #666; }
```
